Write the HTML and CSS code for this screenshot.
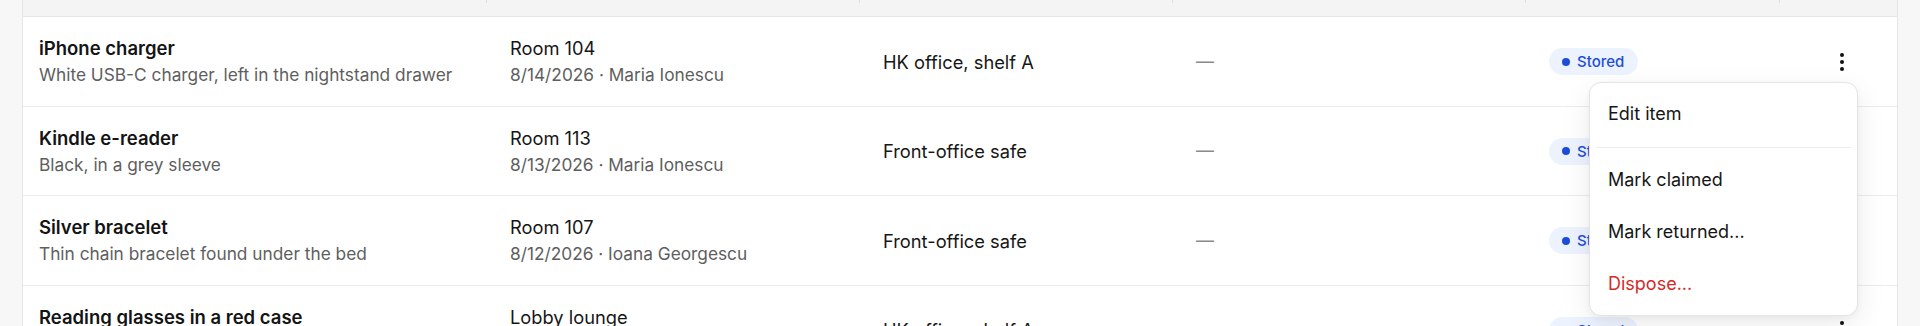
FILE: index.html
```html
<!DOCTYPE html>
<html lang="en">
<head>
<meta charset="utf-8">
<title>Lost &amp; found</title>
<link rel="stylesheet" href="styles.css">
</head>
<body>
<div class="card">
  <div class="thead">
    <div class="th"></div>
    <div class="th"></div>
    <div class="th"></div>
    <div class="th"></div>
    <div class="th"></div>
    <div class="th"></div>
  </div>

  <div class="row">
    <div class="cell">
      <div class="title">iPhone charger</div>
      <div class="sub">White USB-C charger, left in the nightstand drawer</div>
    </div>
    <div class="cell">
      <div class="primary">Room 104</div>
      <div class="sub">8/14/2026 · Maria Ionescu</div>
    </div>
    <div class="cell"><div class="primary">HK office, shelf A</div></div>
    <div class="cell"><span class="dash">—</span></div>
    <div class="cell"><span class="badge"><span class="dot"></span>Stored</span></div>
    <div class="cell actions">
      <div class="menu-wrap">
        <button class="kebab" aria-label="Actions">
          <svg viewBox="0 0 24 24" width="24" height="24"><circle cx="12" cy="5" r="2"/><circle cx="12" cy="12" r="2"/><circle cx="12" cy="19" r="2"/></svg>
        </button>
        <div class="menu">
          <div class="menu-item">Edit item</div>
          <div class="menu-sep"></div>
          <div class="menu-item">Mark claimed</div>
          <div class="menu-item">Mark returned...</div>
          <div class="menu-item danger">Dispose...</div>
        </div>
      </div>
    </div>
  </div>

  <div class="row">
    <div class="cell">
      <div class="title">Kindle e-reader</div>
      <div class="sub">Black, in a grey sleeve</div>
    </div>
    <div class="cell">
      <div class="primary">Room 113</div>
      <div class="sub">8/13/2026 · Maria Ionescu</div>
    </div>
    <div class="cell"><div class="primary">Front-office safe</div></div>
    <div class="cell"><span class="dash">—</span></div>
    <div class="cell"><span class="badge"><span class="dot"></span>Stored</span></div>
    <div class="cell actions">
      <button class="kebab" aria-label="Actions">
        <svg viewBox="0 0 24 24" width="24" height="24"><circle cx="12" cy="5" r="2"/><circle cx="12" cy="12" r="2"/><circle cx="12" cy="19" r="2"/></svg>
      </button>
    </div>
  </div>

  <div class="row">
    <div class="cell">
      <div class="title">Silver bracelet</div>
      <div class="sub">Thin chain bracelet found under the bed</div>
    </div>
    <div class="cell">
      <div class="primary">Room 107</div>
      <div class="sub">8/12/2026 · Ioana Georgescu</div>
    </div>
    <div class="cell"><div class="primary">Front-office safe</div></div>
    <div class="cell"><span class="dash">—</span></div>
    <div class="cell"><span class="badge"><span class="dot"></span>Stored</span></div>
    <div class="cell actions">
      <button class="kebab" aria-label="Actions">
        <svg viewBox="0 0 24 24" width="24" height="24"><circle cx="12" cy="5" r="2"/><circle cx="12" cy="12" r="2"/><circle cx="12" cy="19" r="2"/></svg>
      </button>
    </div>
  </div>

  <div class="row">
    <div class="cell">
      <div class="title">Reading glasses in a red case</div>
      <div class="sub">Left on a sofa by the fireplace</div>
    </div>
    <div class="cell">
      <div class="primary">Lobby lounge</div>
      <div class="sub">8/11/2026 · Andrei Popescu</div>
    </div>
    <div class="cell"><div class="primary">HK office, shelf A</div></div>
    <div class="cell"><span class="dash">—</span></div>
    <div class="cell"><span class="badge"><span class="dot"></span>Stored</span></div>
    <div class="cell actions">
      <button class="kebab" aria-label="Actions">
        <svg viewBox="0 0 24 24" width="24" height="24"><circle cx="12" cy="5" r="2"/><circle cx="12" cy="12" r="2"/><circle cx="12" cy="19" r="2"/></svg>
      </button>
    </div>
  </div>
</div>
</body>
</html>
```

FILE: styles.css
```css
html, body {
  margin: 0;
  height: 100%;
  overflow: hidden;
}
body {
  background: #f7f7f7;
  padding: 0 22px;
  font-family: Inter, "Liberation Sans", sans-serif;
  color: #161616;
}
.card {
  background: #fff;
  border-left: 1px solid #e6e6e6;
  border-right: 1px solid #e6e6e6;
}
.thead, .row {
  display: grid;
  grid-template-columns: 471px 373px 313px 353px 254px 1fr;
}
.thead {
  height: 16px;
  background: #f4f4f4;
  border-bottom: 1px solid #e6e6e6;
}
.th {
  position: relative;
}
.th + .th::before {
  content: "";
  position: absolute;
  left: -8px;
  top: 0;
  width: 1px;
  height: 3px;
  background: #dedede;
}
.row {
  border-bottom: 1px solid #ececec;
}
.cell {
  padding: 19px 16px 18.5px;
  display: flex;
  flex-direction: column;
  justify-content: center;
  align-items: flex-start;
  gap: 3px;
  min-width: 0;
}
.title {
  font-size: 18.5px;
  line-height: 24px;
  font-weight: 600;
  color: #141414;
  white-space: nowrap;
}
.primary {
  font-size: 18.3px;
  line-height: 24px;
  color: #161616;
  white-space: nowrap;
}
.sub {
  font-size: 17.3px;
  line-height: 24px;
  color: #5e5e5e;
  white-space: nowrap;
}
.dash {
  font-size: 18px;
  line-height: 24px;
  color: #8a8a8a;
}
.badge {
  display: inline-flex;
  align-items: center;
  gap: 7px;
  height: 27px;
  padding: 0 14px 0 13px;
  border-radius: 14px;
  background: #edf3fe;
  color: #1d4ed8;
  font-size: 15px;
  font-weight: 500;
}
.dot {
  width: 8px;
  height: 8px;
  border-radius: 50%;
  background: #1d4ed8;
}
.actions {
  align-items: center;
}
.menu-wrap {
  position: relative;
}
.kebab {
  width: 32px;
  height: 32px;
  padding: 0;
  border: 0;
  background: none;
  display: flex;
  align-items: center;
  justify-content: center;
  fill: #111;
}
.menu {
  position: absolute;
  right: 0;
  top: 36px;
  width: 255px;
  padding: 5px 6px 5px;
  background: #fff;
  border: 1px solid #e4e4e4;
  border-radius: 12px;
  box-shadow: 0 10px 30px rgba(0, 0, 0, 0.08), 0 2px 6px rgba(0, 0, 0, 0.04);
  z-index: 10;
}
.menu-item {
  padding: 14px 12px;
  font-size: 18px;
  line-height: 24px;
  color: #161616;
  border-radius: 8px;
}
.menu-item.danger {
  color: #d42a2a;
}
.menu-sep {
  height: 1px;
  background: #ececec;
  margin: 7px 0 6px;
}
```
